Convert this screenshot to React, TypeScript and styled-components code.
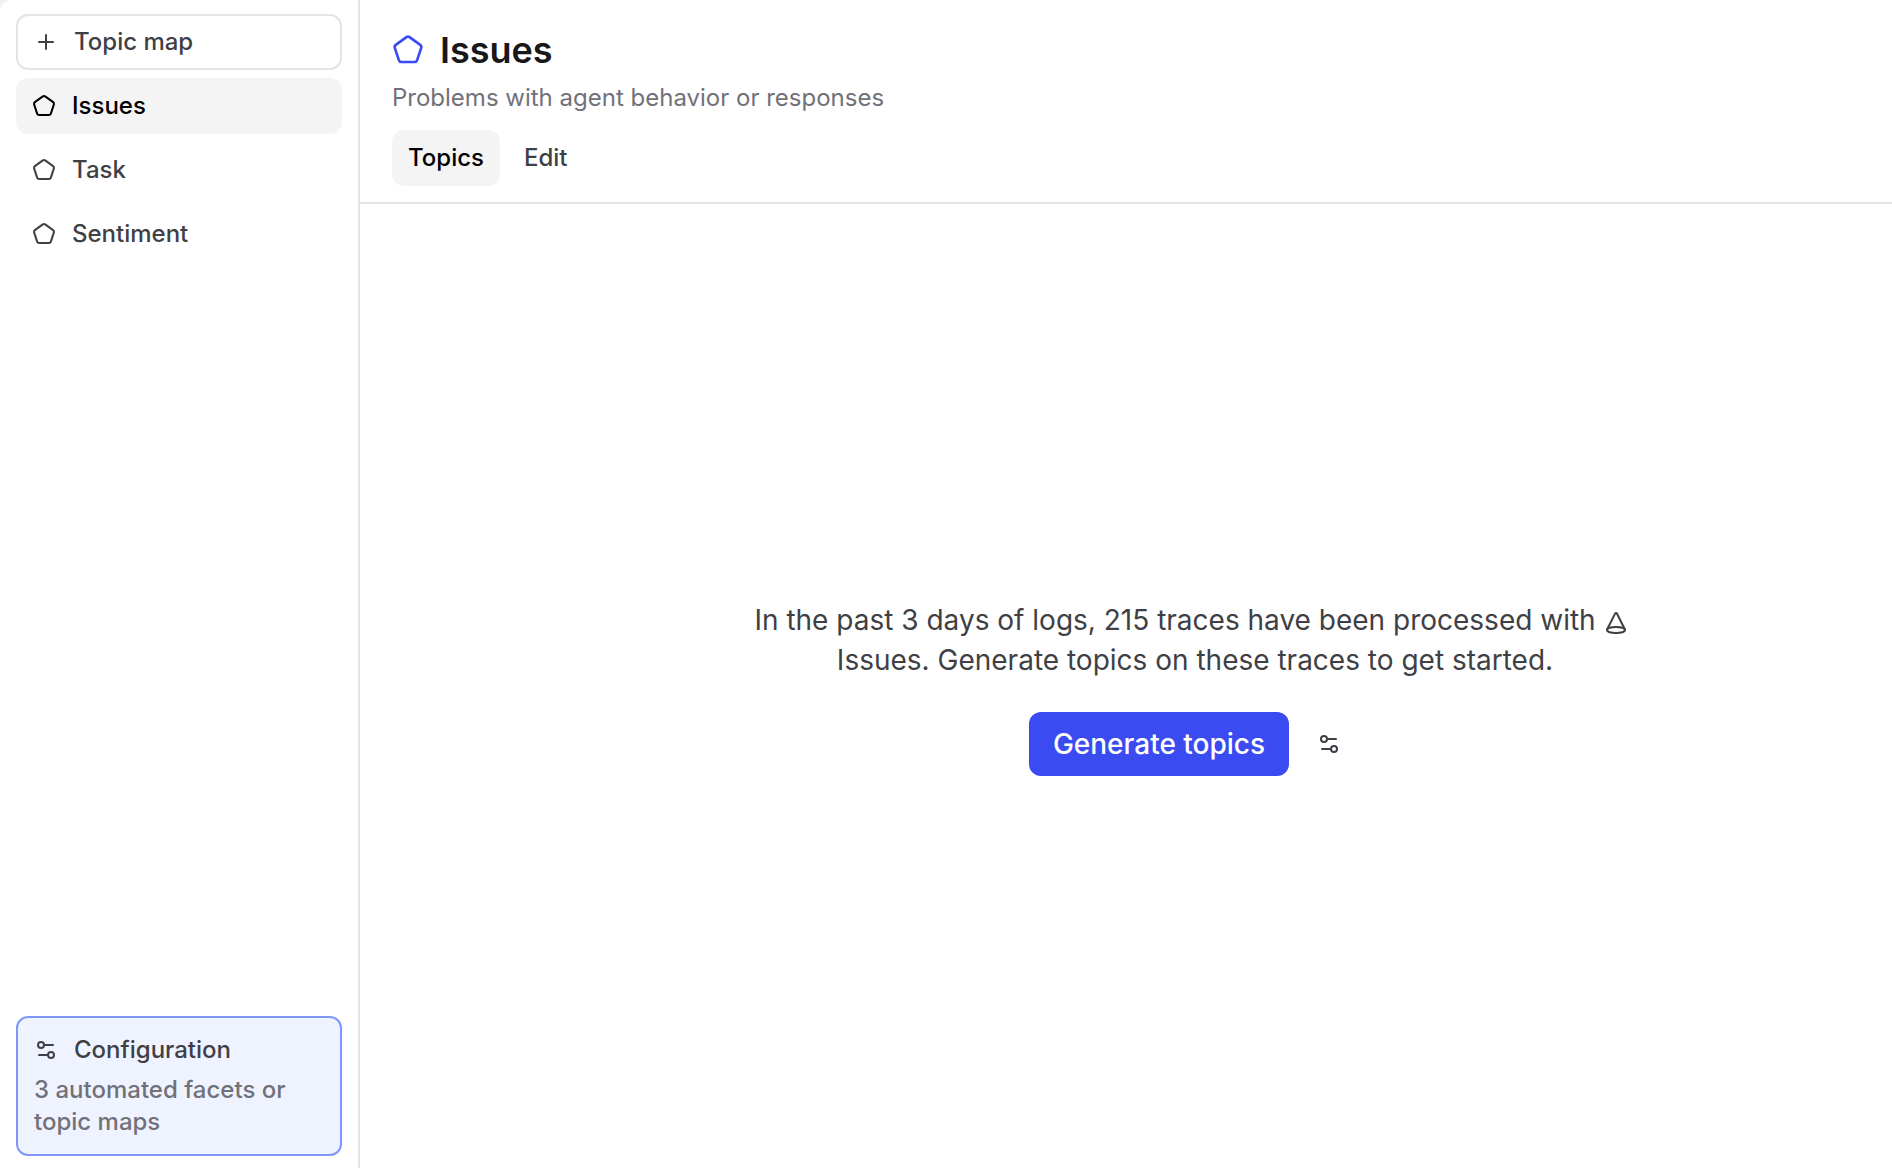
import React from "react";
import styled, { createGlobalStyle } from "styled-components";
import { Cone, Pentagon, Plus, Settings2 } from "lucide-react";

const GlobalStyle = createGlobalStyle`
  *, *::before, *::after { box-sizing: border-box; }
  body {
    margin: 0;
    background: #f0f0f0;
    color: #3f3f46;
    font-family: Inter, "Liberation Sans", sans-serif;
    font-size: 24px;
    line-height: 32px;
  }
  button { font: inherit; color: inherit; cursor: pointer; }
  h1, p { margin: 0; }
`;

const Shell = styled.div`
  display: flex;
  min-height: 100vh;
  background: #ffffff;
  border-top-left-radius: 12px;
`;

const Sidebar = styled.aside`
  display: flex;
  flex-direction: column;
  justify-content: space-between;
  flex: 0 0 360px;
  padding: 14px 16px 12px;
  border-right: 2px solid #e4e4e4;
`;

const NavList = styled.nav`
  display: flex;
  flex-direction: column;
  gap: 8px;
`;

const OutlineButton = styled.button`
  display: flex;
  align-items: center;
  gap: 16px;
  height: 56px;
  padding: 0 16px;
  border: 2px solid #e4e4e4;
  border-radius: 12px;
  background: #ffffff;
  font-weight: 500;
`;

const NavLink = styled.a<{ $active?: boolean }>`
  display: flex;
  align-items: center;
  gap: 16px;
  height: 56px;
  padding: 0 16px;
  border-radius: 12px;
  background: ${(p) => (p.$active ? "#f4f4f4" : "transparent")};
  color: ${(p) => (p.$active ? "#000000" : "#3f3f46")};
  font-weight: 500;
  text-decoration: none;
`;

const ConfigCard = styled.button`
  display: flex;
  flex-direction: column;
  gap: 8px;
  padding: 16px;
  border: 2px solid #7f96fb;
  border-radius: 12px;
  background: #eff3ff;
  font-weight: 500;
  text-align: left;
`;

const ConfigTitle = styled.span`
  display: flex;
  align-items: center;
  gap: 16px;
`;

const ConfigText = styled.span`
  color: #71717a;
`;

const Main = styled.main`
  display: flex;
  flex: 1;
  flex-direction: column;
  min-width: 0;
`;

const Header = styled.header`
  display: flex;
  flex-direction: column;
  padding: 30px 32px 16px;
  border-bottom: 2px solid #e4e4e4;
`;

const TitleRow = styled.div`
  display: flex;
  align-items: center;
  gap: 16px;
  color: #3b4bf2;
`;

const Title = styled.h1`
  color: #18181b;
  font-size: 36px;
  font-weight: 600;
  line-height: 40px;
`;

const Subtitle = styled.p`
  padding: 12px 0 16px;
  color: #71717a;
`;

const Tabs = styled.div`
  display: flex;
  gap: 8px;
`;

const Tab = styled.button<{ $active?: boolean }>`
  height: 56px;
  padding: 0 16px;
  border: 0;
  border-radius: 12px;
  background: ${(p) => (p.$active ? "#f4f4f4" : "transparent")};
  color: ${(p) => (p.$active ? "#000000" : "#3f3f46")};
  font-weight: 500;
`;

const EmptyState = styled.section`
  display: flex;
  flex: 1;
  flex-direction: column;
  align-items: center;
  justify-content: center;
  gap: 32px;
  padding: 4px 0 0 138px;
  font-size: 28px;
  line-height: 40px;
`;

const Message = styled.p`
  max-width: 896px;
  text-align: center;

  svg {
    margin-right: 8px;
    vertical-align: -5px;
  }
`;

const Actions = styled.div`
  display: flex;
  gap: 8px;
`;

const PrimaryButton = styled.button`
  height: 64px;
  padding: 0 24px;
  border: 0;
  border-radius: 12px;
  background: #3b4bf2;
  color: #ffffff;
  font-weight: 500;
`;

const IconButton = styled.button`
  display: flex;
  align-items: center;
  justify-content: center;
  width: 64px;
  height: 64px;
  padding: 0;
  border: 0;
  border-radius: 12px;
  background: transparent;
`;

const topicMaps = ["Issues", "Task", "Sentiment"];

export default function App() {
  return (
    <>
      <GlobalStyle />
      <Shell>
        <Sidebar>
          <NavList>
            <OutlineButton type="button">
              <Plus size={24} />
              Topic map
            </OutlineButton>
            {topicMaps.map((name, i) => (
              <NavLink key={name} href="#" $active={i === 0}>
                <Pentagon size={24} />
                {name}
              </NavLink>
            ))}
          </NavList>
          <ConfigCard type="button">
            <ConfigTitle>
              <Settings2 size={24} />
              Configuration
            </ConfigTitle>
            <ConfigText>3 automated facets or topic maps</ConfigText>
          </ConfigCard>
        </Sidebar>
        <Main>
          <Header>
            <TitleRow>
              <Pentagon size={32} />
              <Title>Issues</Title>
            </TitleRow>
            <Subtitle>Problems with agent behavior or responses</Subtitle>
            <Tabs>
              <Tab type="button" $active>Topics</Tab>
              <Tab type="button">Edit</Tab>
            </Tabs>
          </Header>
          <EmptyState>
            <Message>
              In the past 3 days of logs, 215 traces have been processed with{" "}
              <Cone size={24} /> Issues. Generate topics on these traces to get started.
            </Message>
            <Actions>
              <PrimaryButton type="button">Generate topics</PrimaryButton>
              <IconButton type="button" aria-label="Topic settings">
                <Settings2 size={24} />
              </IconButton>
            </Actions>
          </EmptyState>
        </Main>
      </Shell>
    </>
  );
}
